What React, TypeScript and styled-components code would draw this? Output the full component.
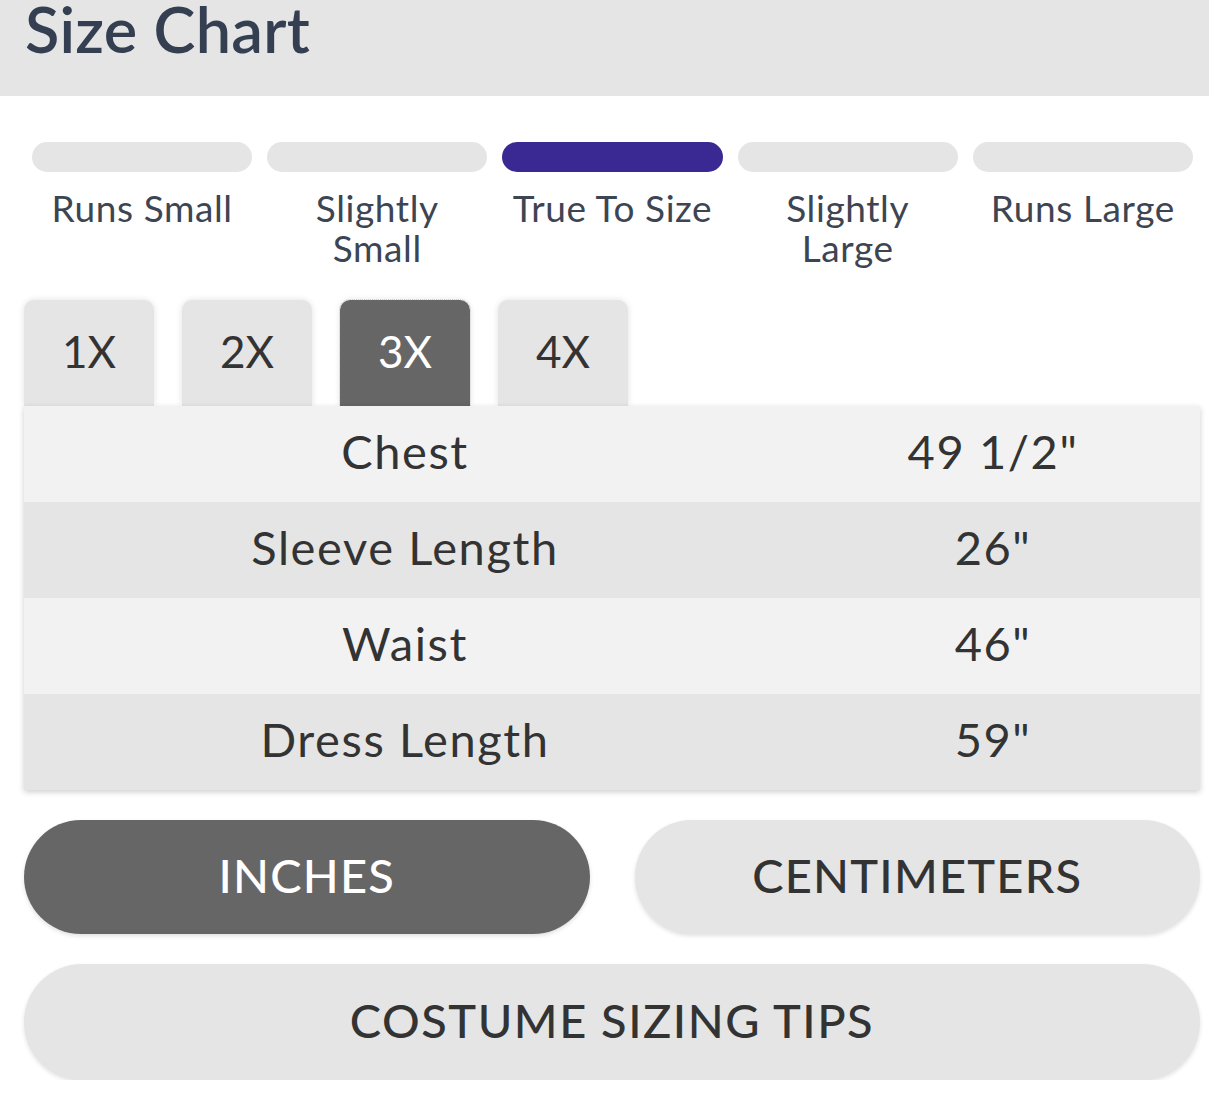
import React from 'react';
import styled, { createGlobalStyle } from 'styled-components';

const Global = createGlobalStyle`
  body {
    margin: 0;
    background: #ffffff;
    font-family: Lato, "Open Sans", sans-serif;
  }
`;

const fits = ['Runs Small', 'Slightly\nSmall', 'True To Size', 'Slightly\nLarge', 'Runs Large'];
const sizes = ['1X', '2X', '3X', '4X'];
const rows = [
  ['Chest', '49 1/2"'],
  ['Sleeve Length', '26"'],
  ['Waist', '46"'],
  ['Dress Length', '59"'],
];

const App = () => {
  return (
    <>
      <Global />
      <Header>
        <Title>Size Chart</Title>
      </Header>
      <Main>
        <FitRow>
          {fits.map((f, i) => (
            <Fit key={f}>
              <Bar $active={i === 2} />
              <FitLabel>{f}</FitLabel>
            </Fit>
          ))}
        </FitRow>
        <Tabs>
          {sizes.map((s) => (
            <Tab key={s} $active={s === '3X'}>{s}</Tab>
          ))}
        </Tabs>
        <Table>
          {rows.map(([k, v], i) => (
            <Row key={k} $odd={i % 2 === 1}>
              <Cell>{k}</Cell>
              <Cell>{v}</Cell>
            </Row>
          ))}
        </Table>
        <UnitRow>
          <Pill $active>INCHES</Pill>
          <Pill>CENTIMETERS</Pill>
        </UnitRow>
        <TipsButton>COSTUME SIZING TIPS</TipsButton>
      </Main>
    </>
  );
};

const Header = styled.header`
  height: 96px;
  background: #e5e5e5;
  padding-left: 25px;
  box-sizing: border-box;
`;

const Title = styled.h1`
  margin: 0;
  font-size: 63px;
  line-height: 58px;
  font-weight: 600;
  color: #343f52;
  letter-spacing: 0.3px;
`;

const Main = styled.main`
  padding: 46px 9px 0 24px;
`;

const FitRow = styled.div`
  display: grid;
  grid-template-columns: repeat(5, 1fr);
  gap: 15px;
  margin: 0 7px 0 8px;
`;

const Fit = styled.div`
  display: flex;
  flex-direction: column;
  align-items: center;
`;

const Bar = styled.div<{ $active?: boolean }>`
  width: 100%;
  height: 30px;
  border-radius: 15px;
  background: ${(p) => (p.$active ? '#3a2893' : '#e5e5e5')};
`;

const FitLabel = styled.div`
  margin-top: 16px;
  font-size: 37px;
  line-height: 40px;
  letter-spacing: 0.6px;
  color: #3d4553;
  text-align: center;
  white-space: pre-line;
`;

const Tabs = styled.div`
  display: flex;
  gap: 28px;
  margin-top: 32px;
`;

const Tab = styled.div<{ $active?: boolean }>`
  width: 130px;
  height: 106px;
  display: flex;
  align-items: center;
  justify-content: center;
  padding-bottom: 4px;
  box-sizing: border-box;
  border-radius: 10px 10px 0 0;
  font-size: 44px;
  background: ${(p) => (p.$active ? '#666666' : '#e5e5e5')};
  color: ${(p) => (p.$active ? '#ffffff' : '#333333')};
  outline: ${(p) => (p.$active ? '1px dotted #cfcfcf' : 'none')};
  box-shadow: 0 0 6px rgba(0, 0, 0, 0.12);
`;

const Table = styled.div`
  position: relative;
  box-shadow: 0 2px 6px rgba(0, 0, 0, 0.2);
`;

const Row = styled.div<{ $odd?: boolean }>`
  display: grid;
  grid-template-columns: 762px 1fr;
  height: 96px;
  box-sizing: border-box;
  padding-bottom: 6px;
  align-items: center;
  background: ${(p) => (p.$odd ? '#e5e5e5' : '#f2f2f2')};
  font-size: 47px;
  letter-spacing: 1.6px;
  color: #333333;
`;

const Cell = styled.div`
  text-align: center;
`;

const UnitRow = styled.div`
  display: grid;
  grid-template-columns: 1fr 1fr;
  gap: 45px;
  margin-top: 30px;
`;

const Pill = styled.button<{ $active?: boolean }>`
  height: 114px;
  padding: 0 0 5px;
  border: none;
  border-radius: 58px;
  font-family: inherit;
  font-size: 47px;
  font-weight: 500;
  letter-spacing: 1.2px;
  background: ${(p) => (p.$active ? '#666666' : '#e5e5e5')};
  color: ${(p) => (p.$active ? '#ffffff' : '#333333')};
  box-shadow: 0 2px 4px rgba(0, 0, 0, 0.12);
`;

const TipsButton = styled(Pill)`
  width: 100%;
  height: 116px;
  margin-top: 30px;
  letter-spacing: 1.5px;
`;

export default App;
